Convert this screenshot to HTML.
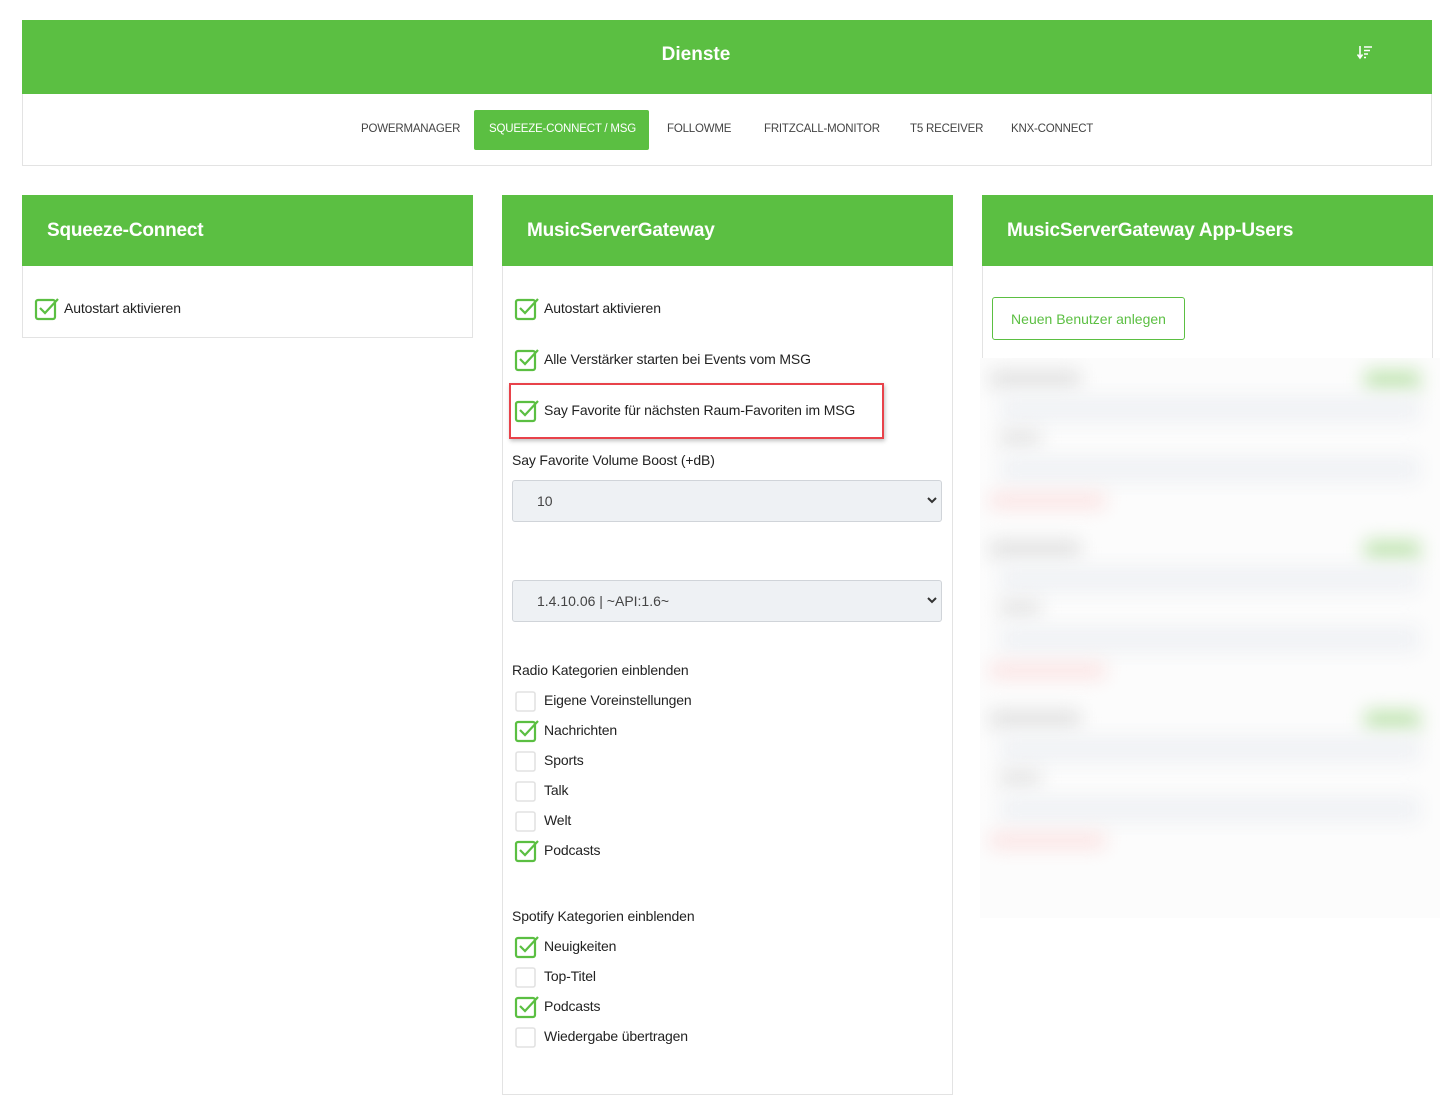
<!DOCTYPE html>
<html><head><meta charset="utf-8"><style>
*{box-sizing:border-box;margin:0;padding:0}
body{width:1452px;height:1065px;background:#fff;font-family:"Liberation Sans",sans-serif;position:relative;overflow:hidden;color:#212529}
.a{position:absolute}
.g{background:#5bbf42}
.card{position:absolute;border:1px solid #e3e3e3;background:#fff}
.ttl{color:#fff;font-weight:bold;font-size:19px;position:absolute;top:24px;left:24px;letter-spacing:-0.2px}
.tab{position:absolute;top:123px;font-size:11.5px;color:#444;letter-spacing:-0.2px}
.cb{position:absolute;width:26px;height:26px;overflow:visible}
.lbl{position:absolute;font-size:14px;color:#222;white-space:nowrap;letter-spacing:-0.15px}
.sel{position:absolute;left:512px;width:430px;height:42px;background:#eef1f4;border:1px solid #d0d4d9;border-radius:3px;font-size:14px;color:#444;padding:12px 0 0 24px}
.sel svg{position:absolute;right:4px;top:15px}
.bl{position:absolute;filter:blur(9px)}
</style></head><body>
<div class="a g" style="left:22px;top:20px;width:1410px;height:74px"></div>
<div class="a" style="left:22px;width:1348px;top:44px;text-align:center;color:#fff;font-weight:bold;font-size:19px;">Dienste</div>
<svg class="a" style="left:1357px;top:46px" width="16" height="14" viewBox="0 0 16 14"><path d="M3 0V11M0.5 8.5L3 12L5.5 8.5" stroke="#fff" stroke-width="1.6" fill="none"/><path d="M7 1H15M7 4.5H13M7 8H11M7 11.5H9" stroke="#fff" stroke-width="1.6"/></svg>
<div class="card" style="left:22px;top:94px;width:1410px;height:72px;border-top:none"></div>
<div class="tab" style="left:361px">POWERMANAGER</div>
<div class="a g" style="left:474px;top:110px;width:175px;height:40px;border-radius:2px"></div>
<div class="tab" style="left:489px;color:#fff">SQUEEZE-CONNECT / MSG</div>
<div class="tab" style="left:667px">FOLLOWME</div>
<div class="tab" style="left:764px">FRITZCALL-MONITOR</div>
<div class="tab" style="left:910px">T5 RECEIVER</div>
<div class="tab" style="left:1011px">KNX-CONNECT</div>

<div class="card" style="left:22px;top:195px;width:451px;height:143px"><div class="g" style="position:absolute;left:-1px;top:-1px;width:451px;height:71px"></div><div class="ttl">Squeeze-Connect</div></div>
<div class="card" style="left:502px;top:195px;width:451px;height:900px"><div class="g" style="position:absolute;left:-1px;top:-1px;width:451px;height:71px"></div><div class="ttl">MusicServerGateway</div></div>
<div class="card" style="left:982px;top:195px;width:451px;height:170px"><div class="g" style="position:absolute;left:-1px;top:-1px;width:451px;height:71px"></div><div class="ttl">MusicServerGateway App-Users</div></div>

<svg width="0" height="0" style="position:absolute"><defs>
<symbol id="on" viewBox="0 0 26 26" overflow="visible"><rect x="2" y="4" width="19" height="19" rx="2" fill="none" stroke="#5bbf42" stroke-width="2.2"/><path d="M6 12L11 17L24 3" fill="none" stroke="#5bbf42" stroke-width="2.2"/></symbol>
<symbol id="off" viewBox="0 0 26 26"><rect x="2" y="4" width="19" height="19" rx="2" fill="#fff" stroke="#e2e2e2" stroke-width="1.6"/></symbol>
</defs></svg>

<svg class="cb" style="left:34px;top:296px"><use href="#on"/></svg><div class="lbl" style="left:64px;top:300px">Autostart aktivieren</div>

<svg class="cb" style="left:514px;top:296px"><use href="#on"/></svg><div class="lbl" style="left:544px;top:300px">Autostart aktivieren</div>
<svg class="cb" style="left:514px;top:347px"><use href="#on"/></svg><div class="lbl" style="left:544px;top:351px">Alle Verstärker starten bei Events vom MSG</div>
<div class="a" style="left:509px;top:383px;width:375px;height:56px;border:2px solid #e8424a;box-shadow:1px 2px 4px rgba(0,0,0,.25)"></div>
<svg class="cb" style="left:514px;top:398px"><use href="#on"/></svg><div class="lbl" style="left:544px;top:402px">Say Favorite für nächsten Raum-Favoriten im MSG</div>
<div class="lbl" style="left:512px;top:452px">Say Favorite Volume Boost (+dB)</div>
<div class="sel" style="top:480px">10<svg width="10" height="8" viewBox="0 0 10 8"><path d="M1 2L5 6L9 2" stroke="#333" stroke-width="2" fill="none"/></svg></div>
<div class="sel" style="top:580px">1.4.10.06 | ~API:1.6~<svg width="10" height="8" viewBox="0 0 10 8"><path d="M1 2L5 6L9 2" stroke="#333" stroke-width="2" fill="none"/></svg></div>
<div class="lbl" style="left:512px;top:662px">Radio Kategorien einblenden</div>
<svg class="cb" style="left:514px;top:688px"><use href="#off"/></svg><div class="lbl" style="left:544px;top:692px">Eigene Voreinstellungen</div>
<svg class="cb" style="left:514px;top:718px"><use href="#on"/></svg><div class="lbl" style="left:544px;top:722px">Nachrichten</div>
<svg class="cb" style="left:514px;top:748px"><use href="#off"/></svg><div class="lbl" style="left:544px;top:752px">Sports</div>
<svg class="cb" style="left:514px;top:778px"><use href="#off"/></svg><div class="lbl" style="left:544px;top:782px">Talk</div>
<svg class="cb" style="left:514px;top:808px"><use href="#off"/></svg><div class="lbl" style="left:544px;top:812px">Welt</div>
<svg class="cb" style="left:514px;top:838px"><use href="#on"/></svg><div class="lbl" style="left:544px;top:842px">Podcasts</div>
<div class="lbl" style="left:512px;top:908px">Spotify Kategorien einblenden</div>
<svg class="cb" style="left:514px;top:934px"><use href="#on"/></svg><div class="lbl" style="left:544px;top:938px">Neuigkeiten</div>
<svg class="cb" style="left:514px;top:964px"><use href="#off"/></svg><div class="lbl" style="left:544px;top:968px">Top-Titel</div>
<svg class="cb" style="left:514px;top:994px"><use href="#on"/></svg><div class="lbl" style="left:544px;top:998px">Podcasts</div>
<svg class="cb" style="left:514px;top:1024px"><use href="#off"/></svg><div class="lbl" style="left:544px;top:1028px">Wiedergabe übertragen</div>

<div class="a" style="left:992px;top:297px;width:193px;height:43px;border:1px solid #5bbf42;border-radius:3px;color:#5bbf42;font-size:14px;text-align:center;padding-top:13px">Neuen Benutzer anlegen</div>

<div class="a" style="left:980px;top:358px;width:460px;height:560px;background:#fcfcfc;overflow:hidden">
 <div class="bl" style="left:10px;top:12px;width:90px;height:18px;background:#e2e2e2"></div>
 <div class="bl" style="left:385px;top:12px;width:55px;height:20px;background:#c4e6b6"></div>
 <div class="bl" style="left:20px;top:38px;width:420px;height:26px;background:#f0f2f5"></div>
 <div class="bl" style="left:20px;top:72px;width:40px;height:16px;background:#e4e4e4"></div>
 <div class="bl" style="left:20px;top:98px;width:420px;height:26px;background:#f0f2f5"></div>
 <div class="bl" style="left:10px;top:135px;width:115px;height:15px;background:#fbe2e2"></div>
 <div class="bl" style="left:10px;top:182px;width:90px;height:18px;background:#e2e2e2"></div>
 <div class="bl" style="left:385px;top:182px;width:55px;height:20px;background:#c4e6b6"></div>
 <div class="bl" style="left:20px;top:208px;width:420px;height:26px;background:#f0f2f5"></div>
 <div class="bl" style="left:20px;top:242px;width:40px;height:16px;background:#e4e4e4"></div>
 <div class="bl" style="left:20px;top:268px;width:420px;height:26px;background:#f0f2f5"></div>
 <div class="bl" style="left:10px;top:305px;width:115px;height:15px;background:#fbe2e2"></div>
 <div class="bl" style="left:10px;top:352px;width:90px;height:18px;background:#e2e2e2"></div>
 <div class="bl" style="left:385px;top:352px;width:55px;height:20px;background:#c4e6b6"></div>
 <div class="bl" style="left:20px;top:378px;width:420px;height:26px;background:#f0f2f5"></div>
 <div class="bl" style="left:20px;top:412px;width:40px;height:16px;background:#e4e4e4"></div>
 <div class="bl" style="left:20px;top:438px;width:420px;height:26px;background:#f0f2f5"></div>
 <div class="bl" style="left:10px;top:475px;width:115px;height:15px;background:#fbe2e2"></div>
</div>
</body></html>
